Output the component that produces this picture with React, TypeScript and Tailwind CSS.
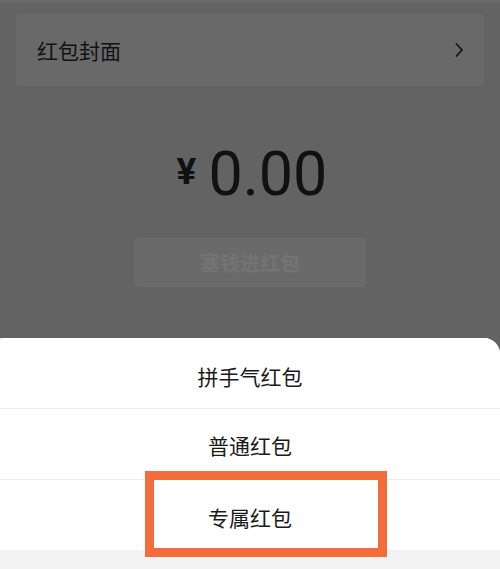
import React from "react";

const cjk = { fontFamily: '"Noto Sans CJK SC", "Noto Sans", sans-serif' };

const ChevronRight = () => (
  <svg width="10" height="16" viewBox="0 0 10 16" fill="none">
    <path d="M2.5 2 L8 8 L2.5 14" stroke="#141414" strokeWidth="1.8" strokeLinecap="round" strokeLinejoin="round" />
  </svg>
);

const options = [
  { label: "拼手气红包", h: "h-[71px]", pt: "pt-[6px]" },
  { label: "普通红包", h: "h-[71px]", pt: "pt-[2px]" },
  { label: "专属红包", h: "h-[70px]", pt: "pt-[4px]" },
];

export default function App() {
  return (
    <div className="relative w-[500px] h-[569px] overflow-hidden bg-[#636363]" style={cjk}>
      {/* dimmed page */}
      <div className="h-[3px] bg-[#6a6a6a]" />
      <div className="mx-[16px] mt-[11px] h-[72px] rounded-[3px] bg-[#696969] flex items-center justify-between pl-[21px] pr-[20px]">
        <span className="text-[21px] text-[#121212] leading-none">红包封面</span>
        <ChevronRight />
      </div>

      <div className="mt-[58px] flex items-start justify-center pl-[4px]">
        <span className="text-[37px] leading-none font-bold text-[#111] mt-[9px] mr-[12px]" style={{ fontFamily: "Roboto, sans-serif" }}>
          ¥
        </span>
        <span className="text-[61px] leading-none text-[#111]" style={{ fontFamily: "Roboto, sans-serif" }}>
          0.00
        </span>
      </div>

      <div className="mt-[33px] mx-auto w-[232px] h-[49px] rounded-[4px] bg-[#6a6a6a] flex items-center justify-center">
        <span className="text-[20px] font-bold text-[#747474] leading-none">塞钱进红包</span>
      </div>

      {/* bottom sheet */}
      <div className="absolute left-[-12px] right-0 top-[338px] bottom-0 rounded-t-[16px] bg-[#f3f3f3] overflow-hidden">
        {options.map((o, i) => (
          <div
            key={o.label}
            className={`bg-white flex items-center justify-center pl-[12px] ${o.h} ${o.pt} ${i < options.length - 1 ? "border-b border-[#ececec]" : ""}`}
          >
            <span className="text-[21px] text-[#1a1a1a] leading-none">{o.label}</span>
          </div>
        ))}
      </div>

      {/* highlight annotation */}
      <div className="absolute left-[145px] top-[471px] w-[242px] h-[86px] border-[9px] border-[#f36c3b]" />
    </div>
  );
}
